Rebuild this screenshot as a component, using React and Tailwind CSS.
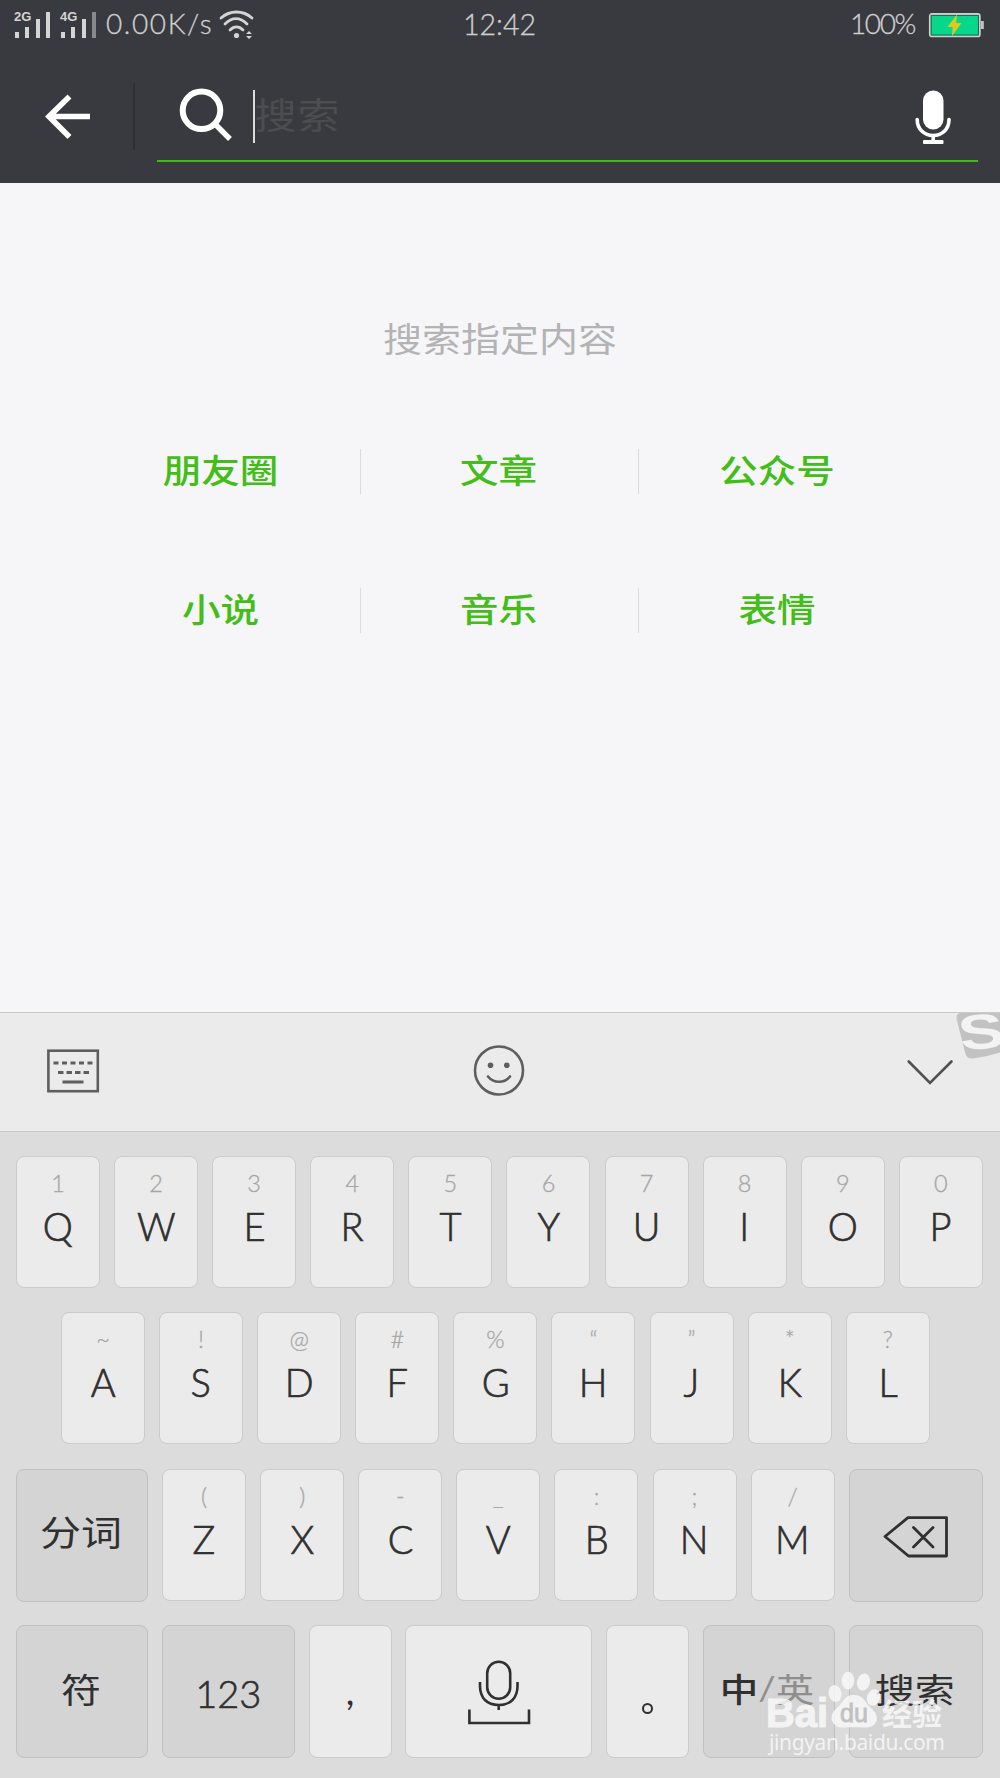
import React from "react";

function Han({ className = "", children }) {
  return (
    <span className={`block scale-y-[.86] whitespace-nowrap leading-none font-['Noto_Sans_CJK_SC',sans-serif] ${className}`}>
      {children}
    </span>
  );
}

function Signal({ label, dim }) {
  return (
    <div className="relative h-[27px] w-[36px]">
      <span className="absolute left-0 top-0 font-['Liberation_Sans',sans-serif] text-[13px] font-bold leading-[12px] text-[#d4d4d5]">
        {label}
      </span>
      <div className="flex h-full items-end gap-[6.4px] pl-[1px]">
        <i className="h-[6px] w-[4px] bg-[#d4d4d5]" />
        <i className="h-[11px] w-[4px] bg-[#d4d4d5]" />
        <i className="h-[19px] w-[4px] bg-[#d4d4d5]" />
        <i className={dim ? "h-[26px] w-[4px] bg-[#88898c]" : "h-[26px] w-[4px] bg-[#d4d4d5]"} />
      </div>
    </div>
  );
}

function StatusBar() {
  return (
    <div className="flex h-[50px] items-start text-[#cfcfd0]">
      <div className="ml-[14px] mt-[11px] flex gap-[10px]">
        <Signal label="2G" />
        <Signal label="4G" dim />
      </div>
      <span className="ml-[10px] mt-[8px] w-[108px] whitespace-nowrap font-['Lato',sans-serif] text-[28px] font-light leading-[30px] tracking-[1.6px] [-webkit-text-stroke:0.3px]">
        0.00K/s
      </span>
      <svg className="ml-[5px] mt-[9px]" width="36" height="30" viewBox="0 0 36 30" fill="none" stroke="#d4d4d5" strokeWidth="2.8" strokeLinecap="round">
        <path d="M2 9C11 1 24 1 33 9M6 15C13 8 21 8 28 15M11 21C15 17 20 17 24 21" />
        <circle cx="17.5" cy="26.5" r="2.6" fill="#d4d4d5" stroke="none" />
        <path d="M27 25l3-3 3 3zM27 27l3 3 3-3z" fill="#d4d4d5" stroke="none" />
      </svg>
      <span className="ml-[208px] mt-[9px] w-[76px] whitespace-nowrap font-['Lato',sans-serif] text-[28.5px] font-light leading-[30px] [-webkit-text-stroke:0.3px]">
        12:42
      </span>
      <span className="ml-[311px] mt-[8px] w-[68px] whitespace-nowrap font-['Lato',sans-serif] text-[28px] font-light leading-[30px] tracking-[-1.4px] [-webkit-text-stroke:0.3px]">
        100%
      </span>
      <svg className="ml-[10px] mt-[12px] shrink-0" width="58" height="26" viewBox="0 0 58 26">
        <rect x="1.8" y="2" width="50" height="22.4" rx="2" fill="#07d78b" stroke="#cfd0d0" strokeWidth="1.8" />
        <rect x="3.2" y="3.4" width="47.2" height="19.6" fill="none" stroke="#2e5d50" strokeWidth="1" />
        <rect x="53" y="9" width="2.8" height="8" fill="#c4c4c6" />
        <path d="M29 2.5L19.5 15H24.7L24 24L33.500 11H28.2Z" fill="#dfc91f" />
      </svg>
    </div>
  );
}

function SearchBar() {
  return (
    <div className="flex h-[133px] items-start">
      <svg className="ml-[44px] mt-[44px]" width="48" height="46" viewBox="0 0 48 46" fill="none" stroke="#fff" strokeWidth="5.6">
        <path d="M46 22.5H6M25.5 2.5L5 22.5L25.5 43" />
      </svg>
      <div className="ml-[41px] mt-[33px] h-[67px] w-[2px] bg-[#2e2f33]" />
      <div className="ml-[22px] flex h-[111.5px] w-[821px] items-start border-b-[2px] border-[#41b818]">
        <svg className="ml-[20px] mt-[36px]" width="58" height="58" viewBox="0 0 58 58" fill="none" stroke="#fff" strokeWidth="6">
          <circle cx="24.5" cy="24.3" r="18.8" />
          <path d="M38 38L53 53" strokeWidth="5.4" />
        </svg>
        <div className="ml-[18px] mt-[40px] h-[53px] w-[1.5px] bg-[#dcdcdd]" />
        <Han className="mt-[43px] text-[42px] tracking-[1px] text-[#4b4d50]">搜索</Han>
        <svg className="ml-auto mr-[27px] mt-[38px]" width="36" height="58" viewBox="0 0 36 58" fill="none" stroke="#fff">
          <rect x="8" y="2.5" width="20.5" height="39" rx="10.2" fill="#fff" stroke="none" />
          <path d="M2.2 31.5C2.2 41 9 47.500 18.2 47.500S34 41 34 31.5" strokeWidth="3.6" strokeLinecap="round" />
          <path d="M18.2 47V53" strokeWidth="3.6" />
          <rect x="8" y="52" width="20.5" height="4" rx="1" fill="#fff" stroke="none" />
        </svg>
      </div>
    </div>
  );
}

const topics = [
  ["朋友圈", "文章", "公众号"],
  ["小说", "音乐", "表情"],
];

function Topics() {
  return (
    <main className="h-[829px] bg-[#f6f6f8] pt-[135px]">
      <Han className="text-center text-[39px] text-[#b3b3b3]">搜索指定内容</Han>
      <div className="mx-auto mt-[45px] w-[834px]">
        {topics.map((row) => (
          <div key={row[0]} className="flex h-[139px] items-center">
            {row.map((t, i) => (
              <div key={t} className={i < 2 ? "flex h-[45px] w-[278px] items-center justify-center border-r border-[#dcdcde]" : "flex h-[45px] w-[278px] items-center justify-center"}>
                <Han className="-ml-[2px] -mt-[6px] text-[38.6px] font-medium text-[#43bd17]">{t}</Han>
              </div>
            ))}
          </div>
        ))}
      </div>
    </main>
  );
}

function Toolbar() {
  return (
    <div className="relative flex h-[119px] items-start overflow-hidden border-t border-[#cacaca] bg-[#ebebeb]">
      <svg className="ml-[46px] mt-[35px]" width="54" height="46" viewBox="0 0 54 46" fill="none" stroke="#5d5f5e" strokeWidth="2.6">
        <rect x="2.4" y="2.7" width="49.4" height="40.5" />
        <path d="M7.5 15H12.5M16 15H21M24.5 15H29.5M33 15H38M41.5 15H46.5M12 24.5H17.5M20.5 24.5H26M29 24.5H34.5M37.5 24.5H43M16.5 34H37.5" strokeWidth="3" />
      </svg>
      <svg className="ml-[373px] mt-[31px]" width="52" height="54" viewBox="0 0 52 54" fill="none" stroke="#5d5f5e" strokeWidth="2.6">
        <circle cx="26" cy="26.5" r="24" />
        <circle cx="17.5" cy="21.2" r="2.8" fill="#5d5f5e" stroke="none" />
        <circle cx="33.8" cy="21.2" r="2.8" fill="#5d5f5e" stroke="none" />
        <path d="M15 32.5C20.5 39.5 31.5 39.5 37 32.5" strokeLinecap="round" />
      </svg>
      <svg className="ml-[380px] mt-[45px]" width="50" height="30" viewBox="0 0 50 30" fill="none" stroke="#505251" strokeWidth="2.6" strokeLinecap="round">
        <path d="M3.7 3.5L25 25L46.500 3.5" />
      </svg>
      <svg className="absolute right-0 top-0" width="46" height="48" viewBox="0 0 46 48">
        <path d="M6 0H46V39.500Q32 44 19 45.500Q13 46 11.5 41L2.6 6Q2 1 6 0Z" fill="#c2c2c2" />
        <text transform="translate(7.5 37.5) scale(1.4 1) rotate(-7)" fontFamily="Liberation Sans" fontWeight="700" fontSize="49" fill="#f3f3f3">S</text>
      </svg>
    </div>
  );
}

function Key({ hint, label }) {
  return (
    <div className="flex h-[132px] w-[84px] shrink-0 flex-col items-center rounded-[8px] border border-[#cbcbcb] bg-[#ebebeb] pt-[11px] font-['Lato',sans-serif]">
      <span className="block h-[30px] text-[23.5px] font-light leading-[30px] text-[#a6a6a6] [-webkit-text-stroke:0.3px]">{hint}</span>
      <span className="mt-[2px] block h-[52px] scale-x-[.95] text-[40px] font-light leading-[52px] text-[#303030] [-webkit-text-stroke:0.7px]">{label}</span>
    </div>
  );
}

function SideKey({ className = "", children }) {
  return (
    <div className={`flex h-[133px] shrink-0 items-center justify-center rounded-[8px] border border-[#c0c0c0] bg-[#d4d4d4] text-[#303030] ${className}`}>
      {children}
    </div>
  );
}

const row1 = ["1Q", "2W", "3E", "4R", "5T", "6Y", "7U", "8I", "9O", "0P"];
const row2 = ["~A", "!S", "@D", "#F", "%G", "“H", "”J", "*K", "?L"];
const row3 = ["(Z", ")X", "-C", "_V", ":B", ";N", "/M"];

function Keys({ items }) {
  return items.map((k) => <Key key={k} hint={k[0]} label={k[1]} />);
}

function Keyboard() {
  return (
    <div className="flex h-[647px] flex-col border-t border-[#c8c8c8] bg-[#dcdcdc] pt-[24px]">
      <div className="flex h-[156.3px] gap-[14.1px] pl-[16px]"><Keys items={row1} /></div>
      <div className="flex h-[156.3px] gap-[14.1px] pl-[61px]"><Keys items={row2} /></div>
      <div className="flex h-[156.3px] gap-[14.1px] pl-[16px]">
        <SideKey className="w-[132px]"><Han className="-ml-[2px] -mt-[10px] text-[41px]">分词</Han></SideKey>
        <Keys items={row3} />
        <SideKey className="w-[134px]">
          <svg className="ml-[1px] mt-[4px]" width="66" height="44" viewBox="0 0 66 44" fill="none" stroke="#303030" strokeWidth="2.8" strokeLinejoin="round" strokeLinecap="round">
            <path d="M25 2.6H63.500V41H25.500L2 21.500ZM30.5 12.5L50 32M50 12.5L30.5 32" />
          </svg>
        </SideKey>
      </div>
      <div className="flex gap-[13.8px] pl-[16px]">
        <SideKey className="w-[132px]"><Han className="-ml-[2px] -mt-[7px] text-[40px]">符</Han></SideKey>
        <SideKey className="w-[133px] font-['Lato',sans-serif] text-[38px] font-light [-webkit-text-stroke:0.6px]"><span className="mt-[4px]">123</span></SideKey>
        <div className="flex h-[133px] w-[83px] shrink-0 items-end justify-center rounded-[8px] border border-[#cbcbcb] bg-[#ebebeb] pb-[42px] font-['Lato',sans-serif] text-[38px] font-normal leading-[50px] text-[#303030]">,</div>
        <div className="flex h-[133px] w-[187px] shrink-0 justify-center rounded-[8px] border border-[#cbcbcb] bg-[#ebebeb]">
          <svg className="mt-[33px]" width="64" height="68" viewBox="0 0 64 68" fill="none" stroke="#303030" strokeWidth="2.6">
            <rect x="20.2" y="2.8" width="23" height="37" rx="11.5" />
            <path d="M13 23V27C13 39 20 46 31.7 46S50.5 39 50.5 27V23M31.7 46V51M2.4 50.5V64H62V50.5" />
          </svg>
        </div>
        <div className="flex h-[133px] w-[83px] shrink-0 items-start justify-center rounded-[8px] border border-[#cbcbcb] bg-[#ebebeb] pt-[77px]">
          <i className="h-[11px] w-[11px] rounded-full border-2 border-[#303030]" />
        </div>
        <SideKey className="w-[132px]">
          <Han className="-ml-[4px] -mt-[8px] flex items-center text-[38.5px]">
            <span className="font-medium">中</span>
            <span className="font-['Lato',sans-serif] text-[#8e8e8e]">/</span>
            <span className="text-[#8e8e8e]">英</span>
          </Han>
        </SideKey>
        <SideKey className="w-[134px]"><Han className="-ml-[2px] -mt-[6px] text-[40px]">搜索</Han></SideKey>
      </div>
    </div>
  );
}

function Watermark() {
  return (
    <svg className="absolute left-[760px] top-[1665px]" width="200" height="100" viewBox="0 0 200 100" opacity="0.82" fill="#fafafa">
      <text x="6" y="62" fontFamily="Liberation Sans" fontWeight="700" fontSize="40" stroke="#fafafa" strokeWidth="1.2" textLength="62" lengthAdjust="spacingAndGlyphs">Bai</text>
      <ellipse cx="75" cy="28.5" rx="6.5" ry="8.5" transform="rotate(-12 75 28.5)" />
      <ellipse cx="88" cy="15.5" rx="6.3" ry="9" />
      <ellipse cx="103.500" cy="17" rx="6.5" ry="8.7" transform="rotate(14 103.5 17)" />
      <ellipse cx="113.5" cy="32.5" rx="6.5" ry="8.5" transform="rotate(18 113.5 32.5)" />
      <path d="M94 30C84 30 83 38 77 43C67 51 72 63 83 62.5C90 62 99 62 105 62.5C117 63 121 52 112 44C105 38 104 30 94 30Z" />
      <text x="80" y="57" fontFamily="Liberation Sans" fontSize="25" fill="#bdbdbd" stroke="#bdbdbd" strokeWidth="0.8" textLength="28" lengthAdjust="spacingAndGlyphs">du</text>
      <text x="122" y="60" fontFamily="Noto Sans CJK SC" fontWeight="700" fontSize="30">经验</text>
      <text x="9" y="85" fontFamily="Noto Sans" fontSize="21" textLength="176" lengthAdjust="spacing">jingyan.baidu.com</text>
    </svg>
  );
}

export default function App() {
  return (
    <div className="relative h-[1778px] w-[1000px] overflow-hidden bg-[#dcdcdc]">
      <header className="h-[183px] bg-[#393a3f]">
        <StatusBar />
        <SearchBar />
      </header>
      <Topics />
      <Toolbar />
      <Keyboard />
      <Watermark />
    </div>
  );
}
